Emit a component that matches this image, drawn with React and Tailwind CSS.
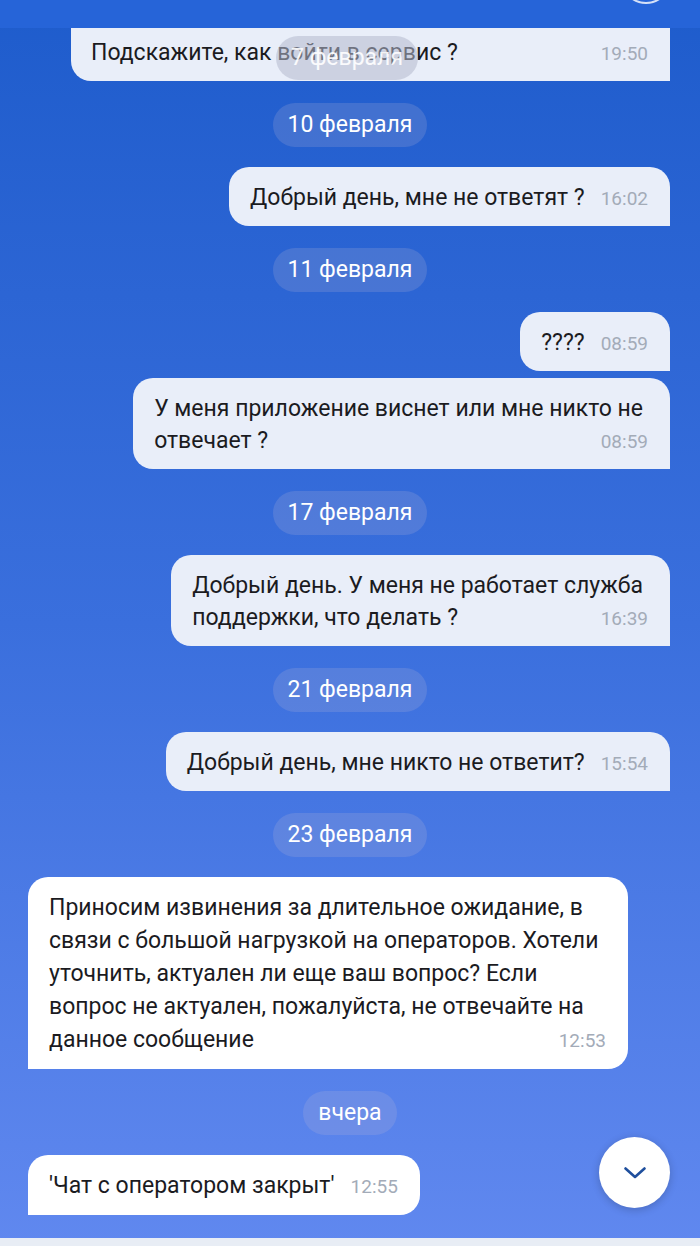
import React from "react";

const FONT = "font-['Roboto','Noto_Sans',sans-serif]";

function Time({ t }) {
  return <span className="text-[19px] text-[#a3abb8] whitespace-nowrap ml-[16px]">{t}</span>;
}

function Bubble({ lines, time, incoming, className = "" }) {
  const base = incoming
    ? "self-start ml-[28px] bg-white rounded-[20px] rounded-bl-none leading-[33px] pt-[14px] pb-[12px]"
    : "self-end mr-[30px] bg-[#e9eef9] rounded-[20px] rounded-br-none leading-[32px] pt-[15px] pb-[11px]";
  const head = lines.slice(0, -1);
  const last = lines[lines.length - 1];
  return (
    <div className={`${base} pl-[21px] pr-[22px] text-[23px] text-[#1b1b1f] ${className}`}>
      {head.map((l, i) => (
        <div key={i} className="whitespace-nowrap pr-[5px]">{l}</div>
      ))}
      <div className="flex items-baseline justify-between">
        <span className="whitespace-nowrap">{last}</span>
        <Time t={time} />
      </div>
    </div>
  );
}

function DateChip({ children }) {
  return (
    <div className="self-center mt-[22px] mb-[20px] h-[44px] px-[15px] flex items-center rounded-full bg-[rgba(190,185,215,0.2)] text-white text-[23px]">
      {children}
    </div>
  );
}

export default function App() {
  return (
    <div className={`${FONT} relative w-[700px] h-[1246px] overflow-hidden flex flex-col bg-gradient-to-b from-[#1e5ccc] via-[#3a6fdd] to-[#6088ef]`}>
      <div className="relative z-10 h-[28px] shrink-0 bg-[#2664d8]">
        <div className="absolute left-[621px] top-[-46px] w-[50px] h-[50px] rounded-full border-2 border-white/80" />
      </div>

      <div className="relative flex-1 flex flex-col">
        <div className="self-end mr-[30px] w-[599px] bg-[#e9eef9] rounded-bl-[20px] pl-[20px] pr-[22px] pt-[8px] pb-[11px] text-[23px] leading-[33px] text-[#1b1b1f] flex items-baseline justify-between">
          <span>Подскажите, как войти в сервис ?</span>
          <Time t="19:50" />
        </div>
        <div className="absolute top-[8px] left-[276px] h-[44px] px-[15px] flex items-center rounded-full bg-[rgba(180,186,205,0.55)] text-white/90 text-[23px]">
          7 февраля
        </div>

        <DateChip>10 февраля</DateChip>
        <Bubble lines={["Добрый день, мне не ответят ?"]} time="16:02" />
        <DateChip>11 февраля</DateChip>
        <Bubble lines={["????"]} time="08:59" className="mb-[7px]" />
        <Bubble lines={["У меня приложение виснет или мне никто не", "отвечает ?"]} time="08:59" />
        <DateChip>17 февраля</DateChip>
        <Bubble lines={["Добрый день. У меня не работает служба", "поддержки, что делать ?"]} time="16:39" />
        <DateChip>21 февраля</DateChip>
        <Bubble lines={["Добрый день, мне никто не ответит?"]} time="15:54" />
        <DateChip>23 февраля</DateChip>
        <Bubble
          incoming
          className="w-[600px]"
          lines={[
            "Приносим извинения за длительное ожидание, в",
            "связи с большой нагрузкой на операторов. Хотели",
            "уточнить, актуален ли еще ваш вопрос? Если",
            "вопрос не актуален, пожалуйста, не отвечайте на",
            "данное сообщение",
          ]}
          time="12:53"
        />
        <DateChip>вчера</DateChip>
        <Bubble incoming lines={["'Чат с оператором закрыт'"]} time="12:55" />
      </div>

      <div className="h-[8px] shrink-0 bg-[#e8edf5]" />

      <div className="absolute right-[30px] bottom-[38px] w-[71px] h-[71px] rounded-full bg-white shadow-[0_2px_8px_rgba(0,0,0,0.2)] flex items-center justify-center">
        <svg width="22" height="12" viewBox="0 0 22 12" fill="none">
          <polyline points="1.5,1.5 11,10 20.5,1.5" stroke="#1f4f9d" strokeWidth="2.6" strokeLinecap="round" strokeLinejoin="round" />
        </svg>
      </div>
    </div>
  );
}
